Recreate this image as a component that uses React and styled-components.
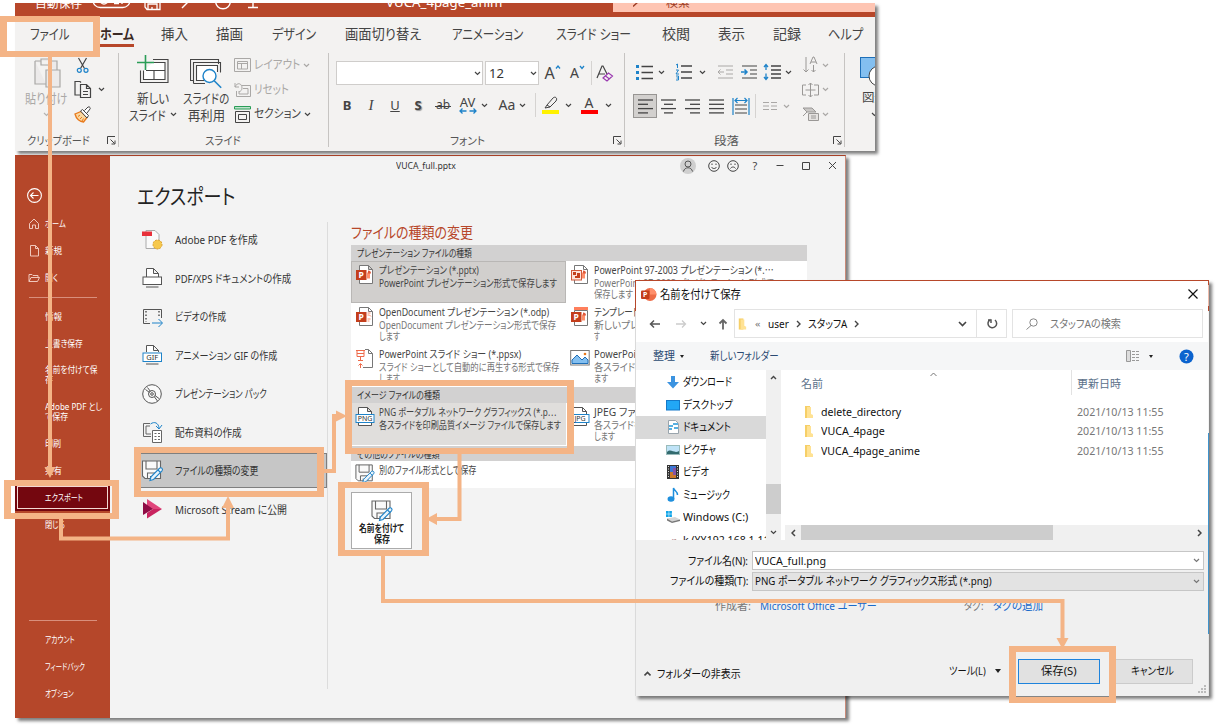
import React, { useLayoutEffect, useRef, useState } from "react";
import styled, { createGlobalStyle } from "styled-components";

const ACCENT = "#f4b486";
const BRAND = "#b7472a";

const Global = createGlobalStyle`
  * { box-sizing: border-box; }
  body { margin: 0; background: #fff; overflow: hidden;
    font-family: "Noto Sans", "Noto Sans CJK JP", sans-serif; font-feature-settings: "palt"; }
`;

/* ---------- text fitted to a column width ---------- */
const FitBox = styled.span`
  display: inline-block;
  flex: none;
  width: ${(p) => p.$w}px;
  line-height: ${(p) => p.$lh || 14}px;
  height: ${(p) => p.$lh || 14}px;
  font-size: ${(p) => p.$s || 12}px;
  color: ${(p) => p.$c || "#333"};
  font-weight: ${(p) => (p.$b ? 700 : 400)};
  white-space: nowrap;
  text-align: left;
`;
const FitInner = styled.span`
  display: inline-block;
  transform-origin: 0 50%;
`;
function Fit({ w, s, c, b, lh, children }) {
  const ref = useRef(null);
  const [k, setK] = useState(1);
  useLayoutEffect(() => {
    setK(w / ref.current.offsetWidth);
  }, [w]);
  return (
    <FitBox $w={w} $s={s} $c={c} $b={b} $lh={lh}>
      <FitInner ref={ref} style={{ transform: `scaleX(${k})` }}>{children}</FitInner>
    </FitBox>
  );
}

/* ---------- drawing helpers ---------- */
const Svg = styled.svg`
  display: block;
  flex: none;
  fill: none;
  stroke: ${(p) => p.$c || "#444"};
  stroke-width: ${(p) => p.$sw || 1};
`;
const Icon = ({ w, h, c, sw, children }) => (
  <Svg width={w} height={h} viewBox={`0 0 ${w} ${h}`} $c={c} $sw={sw}>{children}</Svg>
);
const Chevron = ({ c = "#444" }) => (
  <Icon w={7} h={5} c={c} sw={1.2}><path d="M1 1l2.5 2.5L6 1" /></Icon>
);
const Slot = styled.div`
  flex: none;
  display: flex;
  align-items: center;
  justify-content: center;
  width: ${(p) => p.$w}px;
  margin-left: ${(p) => p.$ml || 0}px;
`;

/* ---------- ribbon window ---------- */
const Desktop = styled.div`
  position: relative;
  width: 1218px;
  height: 727px;
  background: #fff;
  overflow: hidden;
`;
const Window = styled.section`
  position: absolute;
  left: ${(p) => p.$x}px;
  top: ${(p) => p.$y}px;
  width: ${(p) => p.$w}px;
  height: ${(p) => p.$h}px;
  background: ${(p) => p.$bg || "#f3f3f3"};
  box-shadow: 3px 3px 3px rgba(0, 0, 0, 0.5);
`;
const TitleStrip = styled.div`
  height: 14px;
  background: ${BRAND};
  overflow: hidden;
  display: flex;
`;
const StripItem = styled.div`
  flex: none;
  margin-left: ${(p) => p.$ml}px;
  margin-top: ${(p) => p.$mt}px;
`;
const StripSearch = styled.div`
  flex: 1;
  height: 9px;
  margin-left: 111px;
  padding-left: 20px;
  background: #fec5b3;
  overflow: hidden;
  display: flex;
`;
const Tabs = styled.nav`
  height: 36px;
  padding-bottom: 1px;
  display: flex;
  align-items: center;
`;
const Tab = styled.div`
  flex: none;
  display: flex;
  flex-direction: column;
  margin-left: ${(p) => p.$ml}px;
  height: 25px;
  padding-top: 2px;
  border-bottom: 3px solid ${(p) => (p.$active ? BRAND : "transparent")};
`;
const Groups = styled.div`
  display: flex;
  height: 94px;
  overflow: hidden;
`;
const Group = styled.div`
  flex: none;
  width: ${(p) => p.$w}px;
  border-right: ${(p) => (p.$last ? 0 : 1)}px solid #c6c4c2;
  overflow: hidden;
`;
const Tools = styled.div`
  height: 80px;
  display: flex;
  padding-left: ${(p) => p.$pl || 0}px;
`;
const GroupFooter = styled.div`
  height: 14px;
  display: flex;
  align-items: center;
  padding-left: ${(p) => p.$pl}px;
  padding-right: 2px;
  padding-top: 1px;
  justify-content: space-between;
`;
const BigTool = styled.div`
  flex: none;
  width: ${(p) => p.$w}px;
  margin-left: ${(p) => p.$ml || 0}px;
  display: flex;
  flex-direction: column;
  align-items: center;
`;
const BigIcon = styled.div`
  height: 36px;
  display: flex;
  align-items: flex-end;
  padding-bottom: ${(p) => p.$pb || 0}px;
`;
const BigLine = styled.div`
  height: 17px;
  display: flex;
  align-items: center;
  gap: ${(p) => p.$gap || 5}px;
`;
const SmallStack = styled.div`
  margin-left: ${(p) => p.$ml}px;
`;
const SmallRow = styled.div`
  height: 24.5px;
  display: flex;
  align-items: center;
  gap: ${(p) => p.$gap || 3}px;
`;
const ToolRows = styled.div`
  display: flex;
  flex-direction: column;
`;
const ToolRow = styled.div`
  display: flex;
  align-items: center;
  height: 24px;
  margin-top: ${(p) => p.$mt}px;
`;
const FieldBox = styled.div`
  flex: none;
  width: ${(p) => p.$w}px;
  height: 24px;
  margin-left: ${(p) => p.$ml || 0}px;
  padding: 0 1px 0 3px;
  background: #fff;
  border: 1px solid #cfcdcb;
  display: flex;
  align-items: center;
  justify-content: ${(p) => (p.$end ? "flex-end" : "space-between")};
`;
const VRule = styled.div`
  flex: none;
  width: 1px;
  height: 24px;
  margin-left: ${(p) => p.$ml}px;
  background: #d5d3d1;
`;
const Glyph = styled.span`
  font-size: ${(p) => p.$s || 13}px;
  line-height: ${(p) => p.$lh || 16}px;
  color: #444;
  font-weight: ${(p) => (p.$b ? 700 : 400)};
  font-style: ${(p) => (p.$i ? "italic" : "normal")};
  font-family: ${(p) => (p.$i ? '"Liberation Serif", serif' : '"Noto Sans", sans-serif')};
  text-decoration: ${(p) => p.$d || "none"};
  text-shadow: ${(p) => (p.$shadow ? "1px 1px 1px #999" : "none")};
`;
const Struck = styled(Glyph)`
  padding: 0 1px;
  background: linear-gradient(#444, #444) 0 9px / 100% 1px no-repeat;
`;
const GlyphStack = styled.div`
  display: flex;
  flex-direction: column;
  align-items: center;
  height: 18px;
`;
const ColorBar = styled.div`
  width: 17px;
  height: 4px;
  margin-top: 1px;
  background: ${(p) => p.$c};
`;
const AlignButton = styled.div`
  width: 24px;
  height: 24px;
  background: #d2d0ce;
  border: 1px solid #979593;
  display: flex;
  align-items: center;
  justify-content: center;
`;
const Launcher = () => (
  <Icon w={9} h={9}><path d="M.5 8V.5H8M3.5 3.5l4 4M8 4.5V8H4.5" /></Icon>
);
const Lines = ({ rows, c = "#444" }) => (
  <Icon w={17} h={17} c={c} sw={1.3}>
    {rows.map(([a, b], i) => <path key={i} d={`M${a} ${2 + i * 4.3}H${b}`} />)}
  </Icon>
);

const TABS = [
  ["ファイル", 39, 15], ["ホーム", 34, 31, true], ["挿入", 27, 27], ["描画", 27, 28], ["デザイン", 44, 29],
  ["画面切り替え", 76, 29], ["アニメーション", 71, 31], ["スライド ショー", 75, 33], ["校閲", 28, 31],
  ["表示", 27, 28], ["記録", 28, 28], ["ヘルプ", 35, 27],
];

function Ribbon() {
  return (
    <Window $x={15} $y={3} $w={860} $h={148} $bg="#f3f2f1">
      <TitleStrip>
        <StripItem $ml={20} $mt={-12}><Fit w={47} s={12} c="#fff">自動保存</Fit></StripItem>
        <StripItem $ml={10} $mt={-11}>
          <Icon w={39} h={17} c="#fff" sw={1.3}><rect x="1" y="1" width="37" height="14.5" rx="7.2" /><circle cx="12" cy="8" r="4" /><path d="M22 11.500h5M30 12v-5" /></Icon>
        </StripItem>
        <StripItem $ml={13} $mt={-9}>
          <Icon w={17} h={17} c="#fff" sw={1.3}><path d="M1 1h15v14.500H3L1 13zM4 15V10h9v5M8 15v-2" /></Icon>
        </StripItem>
        <StripItem $ml={19} $mt={-8}><Icon w={10} h={14} c="#fff" sw={1.4}><path d="M9 6L2 13" /></Icon></StripItem>
        <StripItem $ml={24} $mt={-10}><Icon w={18} h={17} c="#fff" sw={1.4}><circle cx="9" cy="8.500" r="7.300" /></Icon></StripItem>
        <StripItem $ml={15} $mt={-10}><Icon w={12} h={16} c="#fff" sw={1.4}><path d="M6 1v13.500M1 14.500h10" /></Icon></StripItem>
        <StripItem $ml={22} $mt={-4}><Icon w={7} h={6} c="#fff"><path d="M1 1l2.500 3L6 1" /></Icon></StripItem>
        <StripItem $ml={98} $mt={-13}><Fit w={116} s={12} c="#fff">VUCA_4page_anim</Fit></StripItem>
        <StripSearch>
          <StripItem $ml={0} $mt={-4}><Icon w={7} h={9} c="#9c3a22" sw={1.4}><path d="M6 2L0 7.500" /></Icon></StripItem>
          <StripItem $ml={26} $mt={-13}><Fit w={24} s={12} c="#9c3a22">検索</Fit></StripItem>
        </StripSearch>
      </TitleStrip>
      <Tabs>
        {TABS.map(([t, w, ml, active]) => (
          <Tab key={t} $ml={ml} $active={active}><Fit w={w} s={14} lh={20} b={active} c={active ? "#3b2a25" : "#444"}>{t}</Fit></Tab>
        ))}
      </Tabs>
      <Groups>
        <Group $w={104}>
          <Tools $pl={10}>
            <BigTool $w={43}>
              <BigIcon $pb={0}>
                <Icon w={32} h={32} c="#aaa8a6" sw={1.2}>
                  <path d="M4 4h6V2h10v2h6v9M4 4v23h11M10 4v4h10V4M15 13h14v17H15z" fill="#eceaea" />
                </Icon>
              </BigIcon>
              <BigLine><Fit w={43} s={13} c="#aaa8a6">貼り付け</Fit></BigLine>
              <BigLine><Chevron c="#b5b3b1" /></BigLine>
            </BigTool>
            <SmallStack $ml={6}>
              <SmallRow>
                <Icon w={18} h={17} sw={1.2}>
                  <path d="M4.500 1l6 10.500M12.500 1l-6 10.500" /><g stroke="#1e83c9"><circle cx="5.300" cy="13.300" r="2" /><circle cx="12" cy="13.300" r="2" /></g>
                </Icon>
              </SmallRow>
              <SmallRow $gap={6}>
                <Icon w={18} h={19} sw={1.2}>
                  <path d="M6 15H1V1.500h5l1 1" /><path d="M6.500 4.500h6l4 4v9h-10zM12.500 4.500v4h4M9 11.500h5M9 14.500h5" />
                </Icon>
                <Chevron />
              </SmallRow>
              <SmallRow>
                <Icon w={18} h={17}>
                  <path d="M1 8l6-2.500 6 6-3.500 4.500C6 16 2 12.500 1 8z" fill="#fbd9a0" stroke="#e8781a" strokeWidth="1.300" />
                  <path d="M4 10.500l2-1.500M6 13l2-2M8 15l1.500-2.500" stroke="#e8781a" />
                  <path d="M6.500 5l2-1.500 6 6L13 12z" fill="#fff" /><path d="M10.500 4.500l3.500-3.500q1.500-.5 2 .5t0 1.500L13 7" fill="#fff" />
                </Icon>
              </SmallRow>
            </SmallStack>
          </Tools>
          <GroupFooter $pl={12}><Fit w={63} s={11} c="#555">クリップボード</Fit><Launcher /></GroupFooter>
        </Group>

        <Group $w={210}>
          <Tools $pl={9}>
            <BigTool $w={50}>
              <BigIcon $pb={5}>
                <Icon w={32} h={29} sw={1.1}>
                  <path d="M16 4.500h15v23H3.500V15.500" /><path d="M16 7.500h12v17H6.500V15.500" fill="#fff" /><path d="M9 15.500h19M17 15.500v9" /><path d="M0 7.500h17M8.500 0v15" stroke="#2a9d57" strokeWidth="1.600" />
                </Icon>
              </BigIcon>
              <BigLine><Fit w={32} s={13} c="#444">新しい</Fit></BigLine>
              <BigLine $gap={4}><Fit w={37} s={13} c="#444">スライド</Fit><Chevron /></BigLine>
            </BigTool>
            <BigTool $w={50} $ml={3}>
              <BigIcon>
                <Icon w={32} h={30} sw={1.1}>
                  <path d="M3 21.500H.500V.500h28V5M3.500 24.500V3.500h27v10M15 24.500H3.500" /><path d="M14 21.500H6.500v-15h21V13" fill="#fff" /><circle cx="19.500" cy="17" r="6.500" fill="#fff" stroke="#1e83c9" strokeWidth="1.400" /><path d="M24.200 21.800l7 7" stroke="#1e83c9" strokeWidth="1.600" />
                </Icon>
              </BigIcon>
              <BigLine><Fit w={46} s={13} c="#444">スライドの</Fit></BigLine>
              <BigLine><Fit w={37} s={13} c="#444">再利用</Fit></BigLine>
            </BigTool>
            <SmallStack $ml={3}>
              <SmallRow>
                <Icon w={17} h={15} c="#aaa8a6"><path d="M.5.5h16v13H.5zM3.500 3.500h10v7.500h-10zM3.500 5.500h10M7.500 5.500V11" /></Icon>
                <Fit w={46} s={12} lh={12} c="#aaa8a6">レイアウト</Fit><Chevron c="#aaa8a6" />
              </SmallRow>
              <SmallRow>
                <Icon w={17} h={16} c="#aaa8a6"><path d="M8 3.500h8.500v11H2.500V9M9 6.500h5v5.500H5V9M1 1v4h4M1 5c2-5 7-4 7 1 0 2-1 3-3 4" /></Icon>
                <Fit w={35} s={12} lh={12} c="#aaa8a6">リセット</Fit>
              </SmallRow>
              <SmallRow>
                <Icon w={17} h={17}><path d="M.5.5h16v2.500H.5z" stroke="#2a9d57" fill="#bfe3cd" /><path d="M1.500 5.500h14v11h-14zM4.500 8.500h8v5h-8z" /></Icon>
                <Fit w={47} s={12} lh={12} c="#444">セクション</Fit><Chevron />
              </SmallRow>
            </SmallStack>
          </Tools>
          <GroupFooter $pl={86}><Fit w={36} s={11} c="#555">スライド</Fit></GroupFooter>
        </Group>

        <Group $w={296}>
          <Tools $pl={7}>
            <ToolRows>
              <ToolRow $mt={8}>
                <FieldBox $w={147} $end><Chevron /></FieldBox>
                <FieldBox $w={54} $ml={2}><Fit w={15} s={13} lh={16}>12</Fit><Chevron /></FieldBox>
                <Slot $w={17} $ml={5}><Glyph $s={16}>A</Glyph><Icon w={6} h={18} c="#1e83c9" sw={1.3}><path d="M1 4.500l2-2.500 2 2.500" /></Icon></Slot>
                <Slot $w={15} $ml={9}><Glyph $s={14}>A</Glyph><Icon w={6} h={18} c="#1e83c9" sw={1.3}><path d="M1 2l2 2.500L5 2" /></Icon></Slot>
                <VRule $ml={6} />
                <Slot $w={18} $ml={4}>
                  <Icon w={18} h={19} sw={1.2}><path d="M1 14L6 2h1l4 8M3 10h6" /><path d="M7 14l5.500-5 4 3-5.500 5zM9.500 12l4 3" stroke="#9a3ab0" fill="#f3f2f1" /></Icon>
                </Slot>
              </ToolRow>
              <ToolRow $mt={8}>
                <Slot $w={22}><Glyph $b>B</Glyph></Slot>
                <Slot $w={24} $ml={1}><Glyph $i $s={15}>I</Glyph></Slot>
                <Slot $w={24}><Glyph $d="underline">U</Glyph></Slot>
                <Slot $w={22}><Glyph $b $shadow>S</Glyph></Slot>
                <Slot $w={26} $ml={1}><Struck $s={12}>ab</Struck></Slot>
                <Slot $w={19} $ml={2}>
                  <GlyphStack><Glyph $s={13} $lh={12}>AV</Glyph><Icon w={18} h={6} c="#1e83c9" sw={1.3}><path d="M1 3h6.500M10.500 3H17M3.500.5L1 3l2.500 2.500M14.500.5L17 3l-2.500 2.500" /></Icon></GlyphStack>
                </Slot>
                <Slot $w={14}><Chevron /></Slot>
                <Slot $w={20} $ml={6}><Glyph $s={14}>Aa</Glyph></Slot>
                <Slot $w={10}><Chevron /></Slot>
                <VRule $ml={8} />
                <Slot $w={18} $ml={6}>
                  <Icon w={18} h={18}><path d="M0 16h17" stroke="#fff200" strokeWidth="4" /><path d="M5 9l6-7c2-2 5 0 3 3l-6 6zM5 9l-2 3 5-1" /></Icon>
                </Slot>
                <Slot $w={16}><Chevron /></Slot>
                <Slot $w={18} $ml={4}><GlyphStack><Glyph $s={14} $lh={13}>A</Glyph><ColorBar $c="#f00" /></GlyphStack></Slot>
                <Slot $w={20}><Chevron /></Slot>
              </ToolRow>
            </ToolRows>
          </Tools>
          <GroupFooter $pl={121}><Fit w={35} s={11} c="#555">フォント</Fit><Launcher /></GroupFooter>
        </Group>

        <Group $w={220}>
          <Tools>
            <ToolRows>
              <ToolRow $mt={7}>
                <Slot $w={17} $ml={11}>
                  <Icon w={17} h={17} sw={1.3}><path d="M5.500 2.500H17M5.500 8.500H17M5.500 14.500H17" /><path d="M0 2.500h3M0 8.500h3M0 14.500h3" stroke="#1e83c9" strokeWidth="3" /></Icon>
                </Slot>
                <Slot $w={17}><Chevron /></Slot>
                <Slot $w={18} $ml={5}>
                  <Icon w={18} h={18} sw={1.3}><path d="M6 3H17M6 9H17M6 15H17" /><path d="M2.500 1v4M1 2l1.500-1M1 7h2.500l-2.500 4h3M1 13h2.500v4H1M1.500 15h2" stroke="#1e83c9" strokeWidth="1" /></Icon>
                </Slot>
                <Slot $w={19}><Chevron /></Slot>
                <Slot $w={17} $ml={4}><Icon w={16} h={16} c="#aaa8a6"><path d="M1 2h15M9 6h7M9 10h7M1 14h15M1 8h6M3.500 5.500L1 8l2.500 2.500" /></Icon></Slot>
                <Slot $w={17} $ml={7}><Icon w={16} h={16} sw={1.2}><path d="M1 2h15M9 6h7M9 10h7M1 14h15" /><path d="M0 8h6M3.500 5.500L6 8l-2.500 2.500" stroke="#1e83c9" strokeWidth="1.500" /></Icon></Slot>
                <Slot $w={18} $ml={6}><Icon w={18} h={18} sw={1.3}><path d="M8 3h10M8 7h10M8 11h10M8 15h10" /><path d="M3 2v5M3 10.500v5M1 4l2-2.500L5 4M1 14l2 2.500L5 14" stroke="#1e83c9" /></Icon></Slot>
                <Slot $w={14}><Chevron /></Slot>
              </ToolRow>
              <ToolRow $mt={10}>
                <Slot $w={24} $ml={8}><AlignButton><Lines rows={[[1, 16], [1, 11], [1, 16], [1, 11]]} /></AlignButton></Slot>
                <Slot $w={17} $ml={3}><Lines rows={[[1, 16], [4, 13], [1, 16], [4, 13]]} /></Slot>
                <Slot $w={17} $ml={7}><Lines rows={[[1, 16], [6, 16], [1, 16], [6, 16]]} /></Slot>
                <Slot $w={17} $ml={7}><Lines rows={[[1, 16], [1, 16], [1, 16], [1, 16]]} /></Slot>
                <Slot $w={18} $ml={7}><Icon w={18} h={18} sw={1.2}><path d="M3 8h12M3 12h12M3 16h12" /><path d="M1 1v17M17 1v17M3 3.500h12M5.500 1L3 3.500 5.500 6M12.500 1L15 3.500 12.500 6" stroke="#1e83c9" /></Icon></Slot>
                <VRule $ml={5} />
                <Slot $w={14} $ml={7}><Icon w={14} h={10} c="#aaa8a6"><path d="M0 1.500h6M8 1.500h6M0 5h6M8 5h6M0 8.500h6M8 8.500h6" /></Icon></Slot>
                <Slot $w={18}><Chevron c="#aaa8a6" /></Slot>
              </ToolRow>
            </ToolRows>
            <SmallStack $ml={7}>
              <SmallRow $gap={2}><Icon w={18} h={18} c="#9a9896"><path d="M4 1v15M1.500 13.500L4 16l2.500-2.500M8 8l3-7h1l3 7M9 6h5M11.500 9v7M9.500 14l2 2 2-2" /></Icon><Chevron c="#aaa8a6" /></SmallRow>
              <SmallRow $gap={2}><Icon w={18} h={16} c="#9a9896"><path d="M4 3H.5v10H4M12 3h4.500v10H12M8.500 1v14M6.500 3l2-2 2 2M6.500 13l2 2 2-2M3.500 8h10" /></Icon><Chevron c="#aaa8a6" /></SmallRow>
              <SmallRow $gap={2}><Icon w={18} h={14} c="#9a9896"><path d="M1 1h9l4 4H5zM1 9l4-4" fill="#c9c7c5" /><path d="M6.500 6.500h10v7h-10zM9 9h5M9 11h5" fill="#e5e3e1" /></Icon><Chevron c="#aaa8a6" /></SmallRow>
            </SmallStack>
          </Tools>
          <GroupFooter $pl={89}><Fit w={25} s={11} c="#555">段落</Fit><Launcher /></GroupFooter>
        </Group>

        <Group $w={30} $last>
          <Tools $pl={15}>
            <BigTool $w={29}>
              <BigIcon $pb={3}><Icon w={29} h={29}><rect x=".5" y=".5" width="24" height="20" fill="#83bff0" stroke="#1e6fb8" /><circle cx="19" cy="19" r="10" fill="#fff" /></Icon></BigIcon>
              <BigLine><Fit w={25} s={12} c="#444">図形</Fit></BigLine>
              <BigLine><Chevron /></BigLine>
            </BigTool>
          </Tools>
        </Group>
      </Groups>
    </Window>
  );
}

/* ---------- backstage window ---------- */
const Backstage = styled(Window)`
  display: flex;
  border-top: 1px solid ${BRAND};
  border-right: 1px solid #c98a78;
`;
const SideNav = styled.nav`
  flex: none;
  width: 95px;
  padding-top: 26px;
  background: #b5472a;
`;
const NavRow = styled.div`
  height: ${(p) => p.$h || 27}px;
  display: flex;
  align-items: ${(p) => (p.$top ? "flex-start" : "center")};
  padding-top: ${(p) => p.$pt || 0}px;
  padding-left: ${(p) => (p.$icon ? p.$pl || 13 : 30)}px;
  gap: 5px;
`;
const NavLines = styled.div`
  display: flex;
  flex-direction: column;
`;
const NavSelected = styled.div`
  height: 27px;
  border: 2px solid #74070f;
  background: #74070f;
  box-shadow: inset 0 0 0 1px #f3d9d4;
  display: flex;
  align-items: center;
  padding-left: 28px;
`;
const NavRule = styled.div`
  width: 68px;
  height: 1px;
  margin: ${(p) => p.$m};
  background: #d98f7c;
`;
const BackContent = styled.div`
  flex: 1;
  display: flex;
  flex-direction: column;
`;
const WinTitleBar = styled.header`
  height: 19px;
  display: flex;
  align-items: center;
  padding-left: 286px;
`;
const TitleButtons = styled.div`
  display: flex;
  align-items: center;
  margin-left: 224px;
`;
const BackBody = styled.div`
  display: flex;
`;
const ExportColumn = styled.div`
  flex: none;
  width: 218px;
`;
const PageTitle = styled.h1`
  margin: 8px 0 0 27px;
  height: 28px;
  font-size: 20px;
  font-weight: 400;
`;
const ExportList = styled.div`
  margin-top: 11px;
  height: 467px;
  padding-left: 28px;
  border-right: 1px solid #dcdcdc;
`;
const ExportRow = styled.div`
  height: 35px;
  margin-bottom: 3.5px;
  display: flex;
  align-items: center;
  padding-left: ${(p) => (p.$sel ? 2 : 3)}px;
  gap: 11px;
  background: ${(p) => (p.$sel ? "#c6c6c6" : "transparent")};
  border: ${(p) => (p.$sel ? "1px solid #7f7f7f" : "0")};
`;
const TypePanel = styled.div`
  flex: none;
  margin: 46px 0 0 23px;
  width: 456px;
`;
const PanelTitle = styled.h2`
  margin: 0;
  height: 24px;
  font-size: 16px;
  font-weight: 400;
`;
const SectionBar = styled.div`
  height: ${(p) => p.$h || 16}px;
  background: #d2d1d1;
  display: flex;
  align-items: center;
  padding-left: 6px;
`;
const TypeGrid = styled.div`
  display: grid;
  grid-template-columns: 215px 241px;
  background: #fff;
  padding-bottom: ${(p) => p.$pb || 0}px;
`;
const TypeCell = styled.div`
  height: ${(p) => p.$h || 42}px;
  overflow: hidden;
  display: flex;
  gap: 4px;
  padding: 3px 0 0 4px;
  background: ${(p) => p.$bg || "transparent"};
  box-shadow: ${(p) => (p.$line ? "inset 0 0 0 1px #b9b7b5" : "none")};
`;
const TypeText = styled.div`
  display: flex;
  flex-direction: column;
`;
const SaveAsButton = styled.div`
  width: 61px;
  height: 57px;
  margin-top: 4px;
  padding-top: 7px;
  background: #fff;
  border: 1px solid #ababab;
  display: flex;
  flex-direction: column;
  align-items: center;
`;

const SaveIcon = ({ w = 22, h = 22 }) => (
  <Svg width={w} height={h} viewBox="0 0 22 22" $c="#666" $sw={1.1}>
    <path d="M1 1h18v17.500H3.500L1 16z" fill="#fafafa" />
    <path d="M4.500 1v8h11V1M6 18.500V13h8v5.500M9 18.500V16" />
    <path d="M8.500 20.500l1-3.700 8.500-8.500q1.500-1 2.500 0t0 2.500L12 19.500z" stroke="#1e83c9" fill="#e9f4fc" /><path d="M16.500 10l2.500 2.500" stroke="#1e83c9" />
  </Svg>
);
const DocOutline = ({ children, c = "#777" }) => (
  <Icon w={20} h={21} c={c}>
    <path d="M4.500 1.500h9l4 4v14h-13zM13.500 1.500v4h4" fill="#fff" />
    {children}
  </Icon>
);
const Badge = ({ children, w = 18, fs = 7 }) => (
  <Icon w={20} h={21} c="#555">
    <path d="M3.500 8V1.500h9l4 4V8M12.500 1.500v4h4M3.500 16v3.500h13V16" fill="#fff" />
    <rect x="1" y="8.500" width={w} height="8" fill="#fff" stroke="#1e83c9" />
    <text x="10" y="15.200" fontSize={fs} textAnchor="middle" fill="#333" stroke="none">{children}</text>
  </Icon>
);
const PptMark = () => (
  <>
    <rect x="1" y="6" width="10.500" height="10" fill="#c43e1c" stroke="none" />
    <text x="6.200" y="14" fontSize="8.500" fontWeight="700" textAnchor="middle" fill="#fff" stroke="none">P</text>
  </>
);
const PieMark = () => (
  <>
    <path d="M12 8.500h3v6h-3z" fill="#ff8f6b" stroke="none" /><path d="M13 6.500a3 3 0 0 1 3 3h-3z" fill="#e0593a" stroke="none" />
  </>
);
const PptDoc = () => <DocOutline><PieMark /><PptMark /></DocOutline>;
const OdpDoc = () => (
  <DocOutline><path d="M12.500 7h3M12.500 9h2l1.500 1.500M12.500 13h3M12.500 15h2" stroke="#ff8f6b" /><PptMark /></DocOutline>
);
const Ppt97 = () => (
  <DocOutline>
    <PieMark />
    <rect x="1.500" y="6.500" width="10" height="9.500" fill="#fde2da" stroke="#d0583a" />
    <path d="M3 8h3v3H3zM7 9h3v5H5v-2h2z" fill="#c43e1c" stroke="none" />
  </DocOutline>
);
const Template = () => (
  <Icon w={20} h={21} c="#777">
    <path d="M4.500 4.500h13v15h-13z" fill="#fff" /><path d="M4 2.500h14" stroke="#ff7f5c" strokeWidth="3" />
    <PieMark /><PptMark />
  </Icon>
);
const ShowDoc = () => (
  <Icon w={20} h={21} c="#777">
    <path d="M10 1.500h3.500l4 4v14H8M13.500 1.500v4h4" />
    <path d="M1 2.500h9M2 3v5.500h7V3M2 5.500h7M5.500 9v3.500M3 12.500h5M5.500 20v-4M3.500 17.500l2-2 2 2" stroke="#ee6a4a" />
  </Icon>
);
const Picture = () => (
  <Icon w={20} h={18} c="#777"><rect x=".7" y="2.500" width="18.500" height="14.500" fill="#fff" /><path d="M2 12l5-5 5 5 3-3 3 3v3.500H2z" fill="#83bff0" stroke="#1e6fb8" /><circle cx="15" cy="6" r="1.300" fill="#e8781a" stroke="none" /></Icon>
);

const ExportIcons = {
  adobe: (
    <Icon w={23} h={22} c="#aaa"><path d="M5 1.500h9l4 4v14H5z" fill="#fafafa" /><rect x="1" y="2.500" width="10" height="4.500" fill="#e8303a" stroke="none" /><circle cx="16.500" cy="15.500" r="4.500" fill="#f6c84c" stroke="#d99e2e" strokeDasharray="2 1" /></Icon>
  ),
  pdf: (
    <Icon w={23} h={22} c="#555"><path d="M5.500 10V1.500h7l5 5V10M12.500 1.500v5h5" fill="#fff" /><rect x="2" y="10" width="18.500" height="7.500" fill="#fff" /><path d="M5 20h12.500" /></Icon>
  ),
  video: (
    <Icon w={23} h={22} c="#555"><path d="M9 17.500H2.500v-14h18V12" /><path d="M5 5v11M18 5v7" strokeDasharray="1.500 2" strokeWidth="1.500" /><path d="M11 17h10M17.500 13l4 4-4 4" stroke="#1e83c9" /></Icon>
  ),
  gif: (
    <Icon w={23} h={22} c="#555"><path d="M5.500 8V1.500h7l5 5V8M12.500 1.500v5h5M5 20h12.500" fill="#fff" /><rect x="2" y="9" width="18.500" height="8.500" fill="#fff" stroke="#1e83c9" /><text x="11.200" y="16" fontSize="7.500" textAnchor="middle" fill="#333" stroke="none">GIF</text></Icon>
  ),
  disc: (
    <Icon w={23} h={22} c="#555"><circle cx="11" cy="11" r="9.300" fill="#fafafa" /><circle cx="11" cy="11" r="3.500" /><circle cx="11" cy="11" r="1.300" /><path d="M4.500 6.500l4 3M6.500 4.500l3 4M13.500 14l3 4M14 12.500l4 3" /></Icon>
  ),
  handout: (
    <Icon w={23} h={22} c="#666"><path d="M9 2.500H2.500v13H10M5 5h4M5 5v8h5" /><path d="M9.500 3c4-3 8-1 8.500 4M15 5l3 3 3-4" stroke="#1e83c9" /><path d="M11.500 9.500h9v12h-9zM13.500 12.500h2M17 12.500h2M13.500 15.500h2M17 15.500h2M13.500 18.500h2M17 18.500h2" fill="#fff" /></Icon>
  ),
  save: <SaveIcon w={23} h={22} />,
  stream: (
    <Icon w={23} h={22} c="none"><path d="M6 1l15 10H6z" fill="#e0457b" /><path d="M2 4l10 7-10 6z" fill="#8e0c45" /><path d="M12 11h9L6 20.500V15z" fill="#c9245f" /></Icon>
  ),
};
const EXPORTS = [
  ["adobe", "Adobe PDF を作成", 83], ["pdf", "PDF/XPS ドキュメントの作成", 116], ["video", "ビデオの作成", 51],
  ["gif", "アニメーション GIF の作成", 102], ["disc", "プレゼンテーション パック", 92], ["handout", "配布資料の作成", 67],
  ["save", "ファイルの種類の変更", 83, true], ["stream", "Microsoft Stream に公開", 112],
];
const TypeItem = ({ icon, title, lines = [], c = "#777", ...rest }) => (
  <TypeCell {...rest}>
    {icon}
    <TypeText>
      <Fit w={title[1]} s={10.5} lh={13} c="#444">{title[0]}</Fit>
      {lines.map(([t, w], i) => <Fit key={i} w={w} s={10.5} lh={i ? 11 : 12} c={c}>{t}</Fit>)}
    </TypeText>
  </TypeCell>
);
const NavText = ({ w, children, lh }) => <Fit w={w} s={9} lh={lh || 11} c="#fff">{children}</Fit>;

function BackstageWindow() {
  return (
    <Backstage $x={15} $y={155} $w={831} $h={563}>
      <SideNav>
        <NavRow $icon $h={28} $pl={12}>
          <Icon w={16} h={16} c="#fff" sw={1.1}><circle cx="7.500" cy="7.500" r="6.900" /><path d="M11.500 7.500h-8M6.500 4.500l-3 3 3 3" /></Icon>
        </NavRow>
        <NavRow $icon>
          <Icon w={12} h={11} c="#f0c8bc"><path d="M1.500 5.500V10.500h3V7h3v3.500h3v-5L6 1z" /></Icon><NavText w={21}>ホーム</NavText>
        </NavRow>
        <NavRow $icon>
          <Icon w={12} h={13} c="#f0c8bc"><path d="M2.500 1.500h5l3 3v7.500h-8zM7.500 1.500v3h3" /></Icon><NavText w={17}>新規</NavText>
        </NavRow>
        <NavRow $icon>
          <Icon w={12} h={11} c="#f0c8bc"><path d="M1 9.500v-7h3l1 1h5v2M1 9.500l2-4h8.500l-2 4z" /></Icon><NavText w={13}>開く</NavText>
        </NavRow>
        <NavRule $m="6px 0 5px 14px" />
        <NavRow><NavText w={17}>情報</NavText></NavRow>
        <NavRow><NavText w={38}>上書き保存</NavText></NavRow>
        <NavRow $h={37} $top $pt={8}><NavLines><NavText w={52} lh={10}>名前を付けて保</NavText><NavText w={8} lh={10}>存</NavText></NavLines></NavRow>
        <NavRow $h={36} $top $pt={8}><NavLines><NavText w={57} lh={10}>Adobe PDF とし</NavText><NavText w={23} lh={10}>て保存</NavText></NavLines></NavRow>
        <NavRow><NavText w={16}>印刷</NavText></NavRow>
        <NavRow><NavText w={17}>共有</NavText></NavRow>
        <NavSelected><NavText w={38}>エクスポート</NavText></NavSelected>
        <NavRow><NavText w={20}>閉じる</NavText></NavRow>
        <NavRule $m="82px 0 5px 14px" />
        <NavRow><NavText w={30}>アカウント</NavText></NavRow>
        <NavRow><NavText w={40}>フィードバック</NavText></NavRow>
        <NavRow><NavText w={29}>オプション</NavText></NavRow>
      </SideNav>
      <BackContent>
        <WinTitleBar>
          <Fit w={60} s={9.5} lh={13} c="#333">VUCA_full.pptx</Fit>
          <TitleButtons>
            <Slot $w={16}><Icon w={16} h={16} c="#555"><circle cx="8" cy="8" r="8" fill="#cfcfcf" stroke="none" /><circle cx="8" cy="6" r="3" /><path d="M3.500 13.500c1-5 8-5 9 0" /></Icon></Slot>
            <Slot $w={12} $ml={12}><Icon w={12} h={12}><circle cx="6" cy="6" r="5.300" /><path d="M3.500 7c1 2 4 2 5 0M4 3.500V5M8 3.500V5" /></Icon></Slot>
            <Slot $w={12} $ml={7}><Icon w={12} h={12}><circle cx="6" cy="6" r="5.300" /><path d="M3.500 8.500c1-2 4-2 5 0M4 3.500V5M8 3.500V5" /></Icon></Slot>
            <Slot $w={10} $ml={11}><Glyph $s={11}>?</Glyph></Slot>
            <Slot $w={8} $ml={16}><Icon w={8} h={8}><path d="M.5 3.500h7" /></Icon></Slot>
            <Slot $w={8} $ml={18}><Icon w={8} h={8}><path d="M.5.5h7v7h-7z" /></Icon></Slot>
            <Slot $w={9} $ml={18}><Icon w={9} h={9}><path d="M1 1l7 7M8 1L1 8" /></Icon></Slot>
          </TitleButtons>
        </WinTitleBar>
        <BackBody>
          <ExportColumn>
            <PageTitle><Fit w={98} s={21} lh={26} c="#222">エクスポート</Fit></PageTitle>
            <ExportList>
              {EXPORTS.map(([k, t, w, sel]) => (
                <ExportRow key={k} $sel={sel}>{ExportIcons[k]}<Fit w={w} s={11} lh={15} c="#333">{t}</Fit></ExportRow>
              ))}
            </ExportList>
          </ExportColumn>
          <TypePanel>
            <PanelTitle><Fit w={122} s={15} lh={22} c={BRAND}>ファイルの種類の変更</Fit></PanelTitle>
            <SectionBar><Fit w={115} s={10} c="#333">プレゼンテーション ファイルの種類</Fit></SectionBar>
            <TypeGrid>
              <TypeItem icon={<PptDoc />} title={["プレゼンテーション (*.pptx)", 100]} lines={[["PowerPoint プレゼンテーション形式で保存します", 178]]} c="#444" $bg="#d1cfcd" $line />
              <TypeItem icon={<Ppt97 />} title={["PowerPoint 97-2003 プレゼンテーション (*.⋯", 180]} lines={[["PowerPoint 97-2003 プレゼンテーション形式で", 180], ["保存します", 39]]} />
              <TypeItem icon={<OdpDoc />} title={["OpenDocument プレゼンテーション (*.odp)", 170]} lines={[["OpenDocument プレゼンテーション形式で保存", 177], ["します", 21]]} />
              <TypeItem icon={<Template />} title={["テンプレート (*.potx)", 78]} lines={[["新しいプレゼンテーションの開始点となりま", 180], ["す", 6]]} />
              <TypeItem icon={<ShowDoc />} title={["PowerPoint スライド ショー (*.ppsx)", 142]} lines={[["スライド ショーとして自動的に再生する形式で保存", 180], ["します", 21]]} />
              <TypeItem icon={<Picture />} title={["PowerPoint 画像プレゼンテーション (*.pptx)", 185]} lines={[["各スライドを画像にしたプレゼンテーションとし", 185], ["ます", 14]]} />
            </TypeGrid>
            <SectionBar><Fit w={83} s={10} c="#333">イメージ ファイルの種類</Fit></SectionBar>
            <TypeGrid $pb={1}>
              <TypeItem icon={<Badge>PNG</Badge>} title={["PNG ポータブル ネットワーク グラフィックス (*.p⋯", 177]} lines={[["各スライドを印刷品質イメージ ファイルで保存します", 182]]} c="#444" $bg="#e0dedc" />
              <TypeItem icon={<Badge>JPG</Badge>} title={["JPEG ファイル交換形式 (*.jpg)", 134]} lines={[["各スライドを Web 品質イメージ ファイルで保存", 182], ["します", 21]]} />
            </TypeGrid>
            <SectionBar $h={15}><Fit w={83} s={10} c="#333">その他のファイルの種類</Fit></SectionBar>
            <TypeGrid>
              <TypeItem icon={<SaveIcon w={20} h={20} />} title={["別のファイル形式として保存", 97]} $h={27} />
            </TypeGrid>
            <SaveAsButton>
              <SaveIcon />
              <Fit w={45} s={10} lh={12} c="#222" b>名前を付けて</Fit>
              <Fit w={16} s={10} lh={10} c="#222" b>保存</Fit>
            </SaveAsButton>
          </TypePanel>
        </BackBody>
      </BackContent>
    </Backstage>
  );
}

/* ---------- save dialog ---------- */
const Dialog = styled(Window)`
  display: flex;
  flex-direction: column;
  padding: 1px 1px 0;
  background:
    linear-gradient(${BRAND}, ${BRAND}) 0 0 / 100% 1px no-repeat,
    linear-gradient(${BRAND} 31px, #dadada 31px) 0 0 / 1px 100% no-repeat,
    linear-gradient(${BRAND} 5px, #eebbab 5px 26px, ${BRAND} 26px 31px, #f4f4f4 31px 153px, #3f93cc 153px 354px, #e4e4e4 354px) 100% 0 / 1px 100% no-repeat,
    #fff;
`;
const DialogTitle = styled.header`
  height: 26px;
  display: flex;
  align-items: center;
  padding-left: 5px;
  gap: 3px;
`;
const Push = styled.div`
  margin-left: auto;
  margin-right: ${(p) => p.$r || 0}px;
  display: flex;
  align-items: center;
`;
const AddressRow = styled.div`
  height: 35px;
  padding-bottom: 2px;
  display: flex;
  align-items: center;
  padding-left: 12px;
`;
const Box = styled.div`
  flex: none;
  width: ${(p) => p.$w}px;
  height: ${(p) => p.$h || 29}px;
  margin-left: ${(p) => p.$ml || 0}px;
  padding: 0 ${(p) => p.$pr || 0}px 0 ${(p) => p.$pl || 0}px;
  border: 1px solid ${(p) => p.$bc || "#e3e3e3"};
  background: ${(p) => p.$bg || "#fff"};
  display: flex;
  align-items: center;
  gap: ${(p) => p.$gap || 0}px;
`;
const CommandBar = styled.div`
  height: 28px;
  background: #f5f6f7;
  display: flex;
  align-items: center;
  padding-left: 17px;
`;
const Caret = styled.span`
  flex: none;
  margin-left: ${(p) => p.$ml || 0}px;
  border: ${(p) => p.$s || 2}px solid transparent;
  border-top-color: #222;
  border-top-width: ${(p) => (p.$s || 2) + 1}px;
  border-bottom: 0;
`;
const Browser = styled.div`
  height: 170px;
  display: flex;
`;
const Tree = styled.div`
  flex: none;
  width: 130px;
  padding-top: 1px;
  overflow: hidden;
`;
const TreeRow = styled.div`
  height: 22.5px;
  display: flex;
  align-items: center;
  gap: 3px;
  padding-left: 30px;
  background: ${(p) => (p.$sel ? "#d9d9d9" : "transparent")};
`;
const VScroll = styled.div`
  flex: none;
  width: 15px;
  background: #f0f0f0;
  display: flex;
  flex-direction: column;
  align-items: center;
`;
const ScrollArrow = styled.div`
  flex: none;
  width: 16px;
  height: 15px;
  display: flex;
  align-items: center;
  justify-content: center;
`;
const VThumb = styled.div`
  width: 15px;
  height: 30px;
  margin: 99px 0 11px;
  background: #cdcdcd;
`;
const Files = styled.div`
  flex: 1;
  padding-left: 4px;
  display: flex;
  flex-direction: column;
`;
const FilesHeader = styled.div`
  height: 27px;
  display: flex;
  padding-left: 16px;
`;
const HeaderCell = styled.div`
  width: ${(p) => p.$w}px;
  height: 25px;
  display: flex;
  align-items: center;
  gap: 106px;
  padding-left: ${(p) => p.$pl || 0}px;
  padding-top: 2px;
  border-left: ${(p) => (p.$bl ? "1px solid #e2e2e2" : "0")};
`;
const FileRow = styled.div`
  height: 19.5px;
  display: flex;
  align-items: center;
  padding-left: 17px;
  gap: 6px;
`;
const FileRows = styled.div`
  flex: 1;
  padding-top: 5px;
`;
const NameCell = styled.div`
  width: 250px;
  display: flex;
`;
const HScroll = styled.div`
  height: 15px;
  background: #f0f0f0;
  display: flex;
  align-items: center;
`;
const HThumb = styled.div`
  width: 252px;
  height: 15px;
  background: #cdcdcd;
`;
const Form = styled.div`
  flex: 1;
  background: #f0f0f0;
  padding-top: 11px;
`;
const FieldRow = styled.div`
  height: 19px;
  margin-bottom: 1.5px;
  display: flex;
  align-items: center;
`;
const FieldLabel = styled.div`
  width: 116px;
  padding-right: 4px;
  display: flex;
  justify-content: flex-end;
`;
const MetaRow = styled.div`
  height: 16px;
  margin-top: 7px;
  display: flex;
  align-items: center;
  padding-left: 79px;
`;
const ActionRow = styled.div`
  margin-top: 45px;
  height: 25px;
  display: flex;
  align-items: center;
  padding-left: 8px;
`;
const HideFolders = styled.div`
  display: flex;
  align-items: center;
  gap: 6px;
  padding-top: 5px;
`;
const Button = styled.div`
  width: ${(p) => p.$w}px;
  height: 25px;
  margin-left: ${(p) => p.$ml}px;
  background: #e1e1e1;
  border: ${(p) => (p.$primary ? "1.5px solid #1e83dc" : "1px solid #cbcbcb")};
  display: flex;
  align-items: center;
  justify-content: center;
`;
const Grip = styled.div`
  display: flex;
  justify-content: flex-end;
  padding: 1px 2px 0 0;
`;
const Folder = ({ w = 13, h = 14 }) => (
  <Svg width={w} height={h} viewBox="0 0 13 14" $c="none"><path d="M3 1h5v12H3z" fill="#f6cf67" /><path d="M5 2h4v7l2 1v3H5z" fill="#ffe294" /></Svg>
);
const TreeIcons = [
  <Icon w={14} h={14} c="none"><path d="M5 1h4v6h4l-6 6.500L1 7h4z" fill="#3c93e0" /></Icon>,
  <Icon w={14} h={12} c="#1479c9"><rect x=".5" y="1.500" width="13" height="9.500" fill="#22a7f5" /></Icon>,
  <Icon w={14} h={14} c="#9aa5ad"><path d="M2.500.5h7l3 3v10h-10z" fill="#fff" /><path d="M3 6h4M7 4h5M3 9h3M8 8h4" stroke="#2196d8" strokeWidth="1.500" /></Icon>,
  <Icon w={14} h={12} c="#9bb"><rect x=".5" y="1.500" width="13" height="9" fill="#bfe3f7" /><path d="M1 8c4-4 7 2 12-1v3H1z" fill="#336b6f" stroke="none" /></Icon>,
  <Icon w={14} h={14} c="none"><rect x="1" y="0" width="12" height="14" fill="#333" /><path d="M4 1h6v6H4z" fill="#3d78d6" /><path d="M4 7h6v6H4z" fill="#cc7a2c" /><path d="M7 3h3v7H7z" fill="#8653a6" /><path d="M2.500 1v12M11.500 1v12" stroke="#ddd" strokeDasharray="1 1.500" /></Icon>,
  <Icon w={14} h={15} c="#1e8fdd" sw={1.5}><path d="M7.500 12V1c1 3 4 3 4 7" /><ellipse cx="5" cy="12" rx="2.700" ry="2" fill="#1e8fdd" /></Icon>,
  <Icon w={14} h={12} c="none"><path d="M0 0h2.700v2.700H0zM3.200 0h2.700v2.700H3.200zM0 3.200h2.700v2.700H0zM3.200 3.200h2.700v2.700H3.200z" fill="#12a5e8" /><path d="M1 7.500L9 6l5 2.500L6 10.500z" fill="#d4d4d4" /><path d="M1 7.500l5 3V12L1 9.500zM6 10.500l8-2V10l-8 2z" fill="#777" /></Icon>,
  <Icon w={14} h={12} c="none"><path d="M1 7l8-2 4 2v3H1z" fill="#bbb" /><path d="M6 6l4 3M10 6L6 9" stroke="#d22" strokeWidth="1.500" /></Icon>,
];
const TREE = [["ダウンロード", 49], ["デスクトップ", 50], ["ドキュメント", 48], ["ピクチャ", 33], ["ビデオ", 26], ["ミュージック", 47], ["Windows (C:)", 65], ["k (¥¥192.168.1.11)", 90]];

function SaveDialog() {
  return (
    <Dialog $x={635} $y={280} $w={574} $h={416}>
      <DialogTitle>
        <Icon w={16} h={15} c="none"><circle cx="9" cy="7.500" r="6.500" fill="#ed6c47" /><path d="M9 1a6.500 6.500 0 0 1 6.500 6.500H9z" fill="#ff8f6b" /><rect x="0" y="3.500" width="8.500" height="8.500" rx="1" fill="#c43e1c" /><text x="4.300" y="10.400" fontSize="7" fontWeight="700" textAnchor="middle" fill="#fff">P</text></Icon>
        <Fit w={81} s={12} lh={13} c="#111">名前を付けて保存</Fit>
        <Push $r={10}><Icon w={10} h={10} c="#111" sw={1.2}><path d="M.5.5l9 9M9.500.5l-9 9" /></Icon></Push>
      </DialogTitle>
      <AddressRow>
        <Slot $w={13}><Icon w={12} h={10} c="#555" sw={1.5}><path d="M11 5H1.500M5 1.500L1.500 5 5 8.500" /></Icon></Slot>
        <Slot $w={12} $ml={14}><Icon w={12} h={10} c="#ccc" sw={1.3}><path d="M1 5h9.500M7 1.500L10.500 5 7 8.500" /></Icon></Slot>
        <Slot $w={8} $ml={12}><Chevron /></Slot>
        <Slot $w={12} $ml={10}><Icon w={10} h={12} c="#666" sw={1.8}><path d="M5 11.500V1.500M1.500 5.500L5 2l3.500 3.500" /></Icon></Slot>
        <Box $w={243} $ml={5} $pl={1} $pr={9} $gap={7}>
          <Folder w={12} h={14} />
          <Fit w={6} s={9} c="#777">«</Fit><Fit w={21} s={11} c="#111">user</Fit>
          <Icon w={5} h={8} sw={1.4}><path d="M1 1l3 3-3 3" /></Icon>
          <Fit w={39} s={11} c="#111">スタッフA</Fit>
          <Icon w={5} h={8} sw={1.4}><path d="M1 1l3 3-3 3" /></Icon>
          <Push><Icon w={9} h={6} sw={1.6}><path d="M1 1l3.500 3.500L8 1" /></Icon></Push>
        </Box>
        <Box $w={31} $ml={-1} $pl={10}><Icon w={11} h={11} c="#555" sw={1.5}><path d="M3.500 1.500A4.300 4.300 0 1 0 8 2M1 2h3v3" /></Icon></Box>
        <Box $w={191} $ml={5} $pl={13} $gap={12}>
          <Icon w={12} h={12} c="#888"><circle cx="7.500" cy="4.500" r="3.700" /><path d="M5 7.500L.5 11.500" /></Icon>
          <Fit w={71} s={11} c="#777">スタッフAの検索</Fit>
        </Box>
      </AddressRow>
      <CommandBar>
        <Fit w={22} s={11} c="#2b4a72">整理</Fit><Caret $ml={5} />
        <Slot $w={69} $ml={26}><Fit w={69} s={11} c="#2b4a72">新しいフォルダー</Fit></Slot>
        <Push $r={14}>
          <Icon w={14} h={12} c="#999"><path d="M.5.500h4v11h-4z" fill="#ddd" /><path d="M6 1.500h3M10 1.500h3M6 4.500h3M10 4.500h3M6 7.500h3M10 7.500h3M6 10.500h3M10 10.500h3" /></Icon>
          <Caret $ml={9} />
          <Slot $w={15} $ml={26}><Icon w={15} h={15} c="none"><circle cx="7.500" cy="7.500" r="7" fill="#0b63ce" /><text x="7.500" y="11.500" fontSize="11" textAnchor="middle" fill="#fff">?</text></Icon></Slot>
        </Push>
      </CommandBar>
      <Browser>
        <Tree>
          {TREE.map(([t, w], i) => (
            <TreeRow key={t} $sel={i === 2}>{TreeIcons[i]}<Fit w={w} s={11.5} lh={16} c="#111">{t}</Fit></TreeRow>
          ))}
        </Tree>
        <VScroll>
          <ScrollArrow><Icon w={7} h={5} sw={1.4}><path d="M1 4l2.500-2.500L6 4" /></Icon></ScrollArrow>
          <VThumb />
          <ScrollArrow><Chevron /></ScrollArrow>
        </VScroll>
        <Files>
          <FilesHeader>
            <HeaderCell $w={270}>
              <Fit w={22} s={11} c="#5b7089">名前</Fit>
              <Slot $w={8}><Icon w={7} h={24} c="#777"><path d="M.500 4l3-3 3 3" /></Icon></Slot>
            </HeaderCell>
            <HeaderCell $w={120} $pl={5} $bl><Fit w={44} s={11} c="#5b7089">更新日時</Fit></HeaderCell>
          </FilesHeader>
          <FileRows>
            {[["delete_directory", 80], ["VUCA_4page", 64], ["VUCA_4page_anime", 99]].map(([n, w]) => (
              <FileRow key={n}><Folder /><NameCell><Fit w={w} s={11} c="#111">{n}</Fit></NameCell><Fit w={87} s={11} c="#777">2021/10/13 11:55</Fit></FileRow>
            ))}
          </FileRows>
          <HScroll>
            <ScrollArrow><Icon w={5} h={8} sw={1.5}><path d="M4 1L1 4l3 3" /></Icon></ScrollArrow>
            <HThumb />
            <Push $r={1}><ScrollArrow><Icon w={5} h={8} sw={1.5}><path d="M1 1l3 3-3 3" /></Icon></ScrollArrow></Push>
          </HScroll>
        </Files>
      </Browser>
      <Form>
        <FieldRow>
          <FieldLabel><Fit w={60} s={11} c="#111">ファイル名(N):</Fit></FieldLabel>
          <Box $w={452} $h={19} $pl={2} $pr={3} $bc="#c6c6c6"><Fit w={71} s={11} c="#111">VUCA_full.png</Fit><Push><Chevron c="#777" /></Push></Box>
        </FieldRow>
        <FieldRow>
          <FieldLabel><Fit w={78} s={11} c="#111">ファイルの種類(T):</Fit></FieldLabel>
          <Box $w={452} $h={19} $pl={2} $pr={3} $bc="#c6c6c6" $bg="#e3e3e3"><Fit w={237} s={11} c="#111">PNG ポータブル ネットワーク グラフィックス形式 (*.png)</Fit><Push><Chevron c="#777" /></Push></Box>
        </FieldRow>
        <MetaRow>
          <Fit w={36} s={11} c="#777">作成者:</Fit>
          <Slot $w={117} $ml={9}><Fit w={117} s={11} c="#1b6ac9">Microsoft Office ユーザー</Fit></Slot>
          <Slot $w={20} $ml={87}><Fit w={20} s={11} c="#777">タグ:</Fit></Slot>
          <Slot $w={50} $ml={9}><Fit w={50} s={11} c="#1b6ac9">タグの追加</Fit></Slot>
        </MetaRow>
        <ActionRow>
          <HideFolders><Icon w={7} h={6} sw={1.6}><path d="M.5 4.500l3-3 3 3" /></Icon><Fit w={84} s={11} c="#111">フォルダーの非表示</Fit></HideFolders>
          <Slot $w={37} $ml={208}><Fit w={37} s={11} c="#111">ツール(L)</Fit></Slot>
          <Caret $ml={9} $s={3.5} />
          <Button $w={82} $ml={17} $primary><Fit w={36} s={11} c="#111">保存(S)</Fit></Button>
          <Button $w={82} $ml={11}><Fit w={43} s={11} c="#111">キャンセル</Fit></Button>
        </ActionRow>
        <Grip><Icon w={8} h={8} c="none"><path d="M6 0h2v2H6zM3 3h2v2H3zM6 3h2v2H6zM0 6h2v2H0zM3 6h2v2H3zM6 6h2v2H6z" fill="#bbb" /></Icon></Grip>
      </Form>
    </Dialog>
  );
}

/* ---------- step markers and connectors ---------- */
const Marker = styled.div`
  position: absolute;
  left: ${(p) => p.$x}px;
  top: ${(p) => p.$y}px;
  width: ${(p) => p.$w}px;
  height: ${(p) => p.$h}px;
  border: solid ${ACCENT};
  border-width: 6px 7px;
`;
const Connectors = styled.svg`
  position: absolute;
  left: 0;
  top: 0;
  fill: none;
  stroke: ${ACCENT};
  stroke-width: 4;
`;
const MARKS = [[0, 16, 100, 41], [4, 480, 115, 39], [134, 447, 190, 50], [345, 380, 229, 74], [338, 482, 91, 74], [1009, 646, 107, 57]];

export default function App() {
  return (
    <Desktop>
      <Global />
      <BackstageWindow />
      <Ribbon />
      <SaveDialog />
      {MARKS.map(([x, y, w, h]) => <Marker key={x} $x={x} $y={y} $w={w} $h={h} />)}
      <Connectors width="1218" height="727">
        <path d="M50 56V470M61 518V538.500H228V505M324 471H334V416H340M459.500 454V519H434M383 556V601H1062.500V640" />
        <path d="M44.500 467h11L50 478zM222 508h12l-6-12zM336 410.500v11l11-5.500zM437 513v12l-11-6zM1056.500 638h12l-6 11z" fill={ACCENT} stroke="none" />
      </Connectors>
    </Desktop>
  );
}
